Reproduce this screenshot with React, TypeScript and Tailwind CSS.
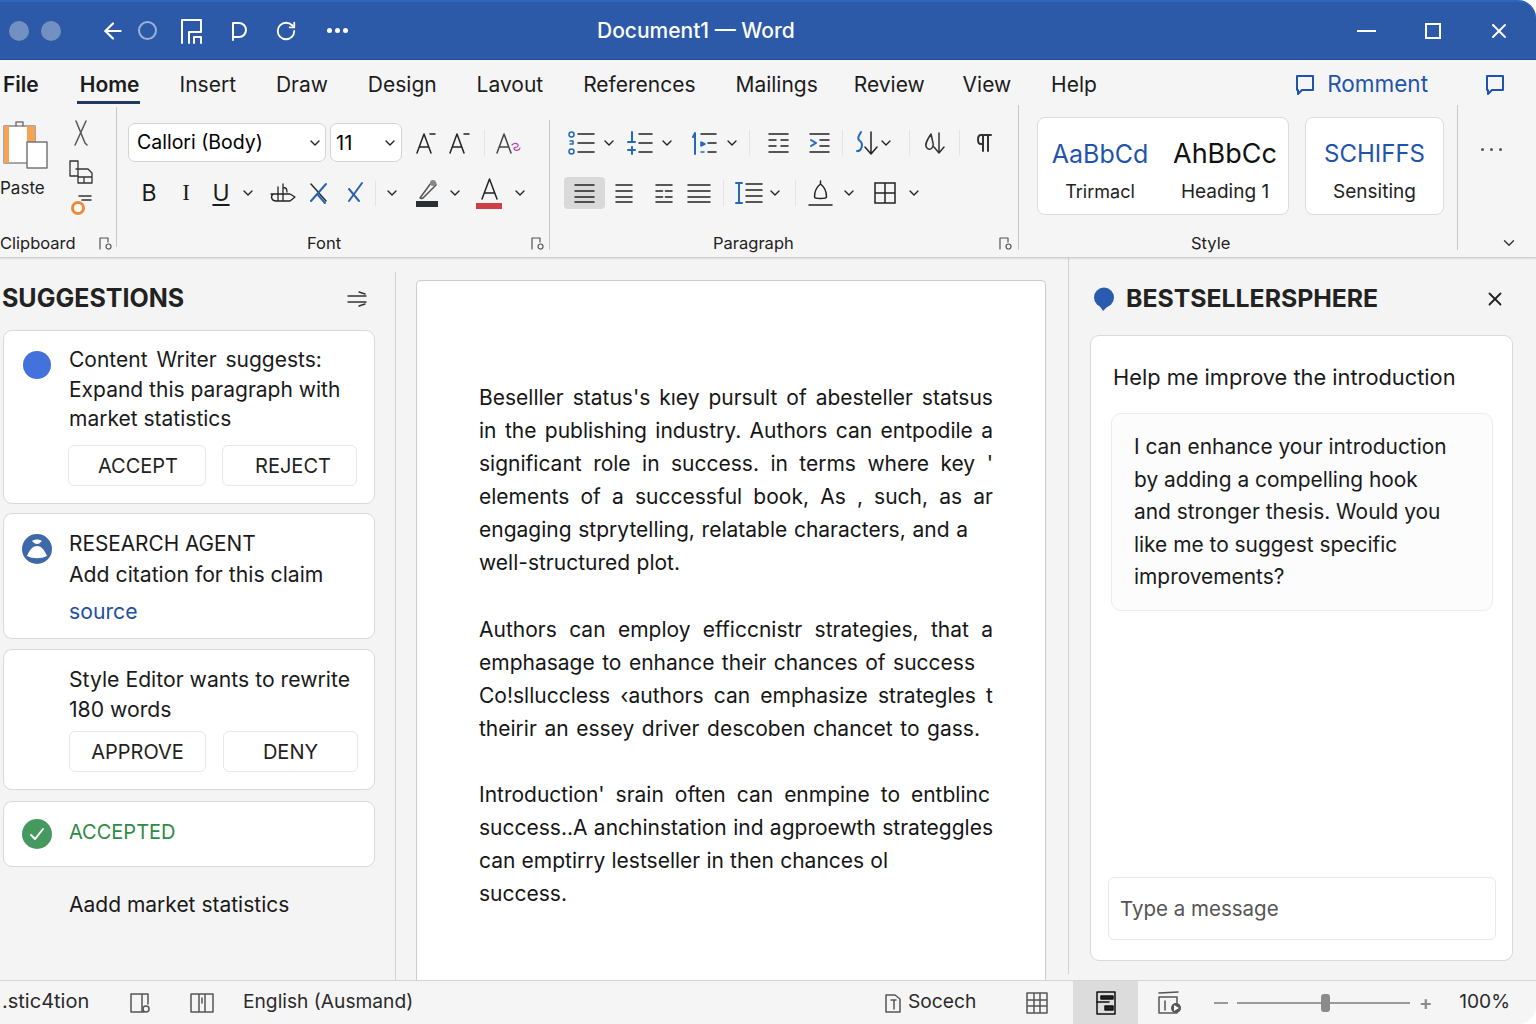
import type { ReactNode } from "react";
import { ArrowLeft, ChevronDown, RotateCw, X } from "lucide-react";

// stroke icon wrapper, the viewBox is always the pixel size of the icon
const Ico = ({ w, h, className = "", children }: { w: number; h: number; className?: string; children: ReactNode }) => (
  <svg
    width={w}
    height={h}
    viewBox={`0 0 ${w} ${h}`}
    fill="none"
    stroke="currentColor"
    strokeWidth="1.5"
    strokeLinecap="round"
    strokeLinejoin="round"
    className={`shrink-0 ${className}`}
  >
    {children}
  </svg>
);

const Chev = ({ className = "" }: { className?: string }) => (
  <ChevronDown size={16} strokeWidth={2} className={`shrink-0 text-[#222] ${className}`} />
);

const Sep = ({ className = "" }: { className?: string }) => (
  <div className={`w-px h-[26px] shrink-0 bg-[#e4e4e4] ${className}`} />
);

const GroupLine = ({ className = "" }: { className?: string }) => (
  <div className={`w-px shrink-0 bg-[#c8c8c8] ${className}`} />
);

const Launcher = ({ className = "" }: { className?: string }) => (
  <Ico w={13} h={13} className={`text-[#555] ${className}`}>
    <path d="M1 12V1h8v4M1 1" strokeWidth="1.2" />
    <circle cx="9.5" cy="9.5" r="2.5" strokeWidth="1.2" />
  </Ico>
);

// horizontal text lines, used for the paragraph buttons
const Lines = ({ w, ys, short = [], className = "" }: { w: number; ys: number[]; short?: number[]; className?: string }) => (
  <Ico w={w} h={22} className={`text-[#222] ${className}`}>
    {ys.map((y, i) =>
      short.includes(i) ? (
        <path key={y} d={`M1 ${y}H${w * 0.42}M${w * 0.58} ${y}H${w - 1}`} />
      ) : (
        <path key={y} d={`M1 ${y}H${w - 1}`} />
      )
    )}
  </Ico>
);

const Bubble = ({ className = "" }: { className?: string }) => (
  <Ico w={20} h={22} className={className}>
    <path d="M2 2h16v14H7l-4 4v-4H2z" strokeWidth="2" />
  </Ico>
);

const TitleBar = () => (
  <div className="h-[60px] shrink-0 flex items-center bg-[#2c5aa8] border-t-2 border-t-[#2f65c0] border-b border-b-[#234d96] rounded-tr-[18px] text-white">
    <div className="w-[20px] h-[20px] rounded-full bg-[#7390c2] ml-[9px]" />
    <div className="w-[20px] h-[20px] rounded-full bg-[#7390c2] ml-[12px]" />
    <ArrowLeft size={26} strokeWidth={2} className="ml-[39px]" />
    <div className="w-[19px] h-[19px] rounded-full border-2 border-[#9db2d6] ml-[12px]" />
    <Ico w={24} h={26} className="ml-[23px]">
      <path d="M2 25V2h19v12H9v11M14 25v-6h7v6" strokeWidth="2" />
    </Ico>
    <Ico w={18} h={20} className="ml-[27px]">
      <path d="M2 19V2h6a7 7 0 0 1 0 14H3" strokeWidth="2" />
    </Ico>
    <RotateCw size={22} strokeWidth={2} className="ml-[26px]" />
    <div className="flex gap-[3px] ml-[30px]">
      <div className="w-[5px] h-[5px] rounded-full bg-white" />
      <div className="w-[5px] h-[5px] rounded-full bg-white" />
      <div className="w-[5px] h-[5px] rounded-full bg-white" />
    </div>
    <div className="ml-[249px] text-[21px] font-medium">Document1 — Word</div>
    <div className="w-[19px] h-[2px] bg-white ml-[562px]" />
    <div className="w-[16px] h-[16px] border-2 border-white ml-[49px]" />
    <X size={24} strokeWidth={2} className="ml-[46px]" />
  </div>
);

const TabRow = () => (
  <div className="h-[45px] shrink-0 flex items-start pt-[11px] pl-[3px] pr-[31px] bg-[#f5f5f5] text-[21px] leading-[28px] text-[#1c1c1c]">
    <div className="font-semibold mr-[41px]">File</div>
    <div className="font-semibold -ml-[3px] pl-[3px] pb-[2px] border-b-[3px] border-[#1e3a5f] mr-[40px]">Home</div>
    <div className="flex gap-[39.9px]">
      <div>Insert</div>
      <div>Draw</div>
      <div>Design</div>
      <div>Lavout</div>
      <div>References</div>
      <div>Mailings</div>
      <div className="-ml-[4px]">Review</div>
      <div className="-ml-[2px]">View</div>
      <div>Help</div>
    </div>
    <div className="ml-auto flex items-start text-[22.5px] text-[#1f54ad]">
      <Bubble className="mt-[3px] -ml-[2px]" />
      <div className="ml-[12px] -mt-[1px]">Romment</div>
      <Bubble className="mt-[3px] ml-[57px]" />
    </div>
  </div>
);

const FontGroup = () => (
  <div className="w-[432px] shrink-0 flex flex-col">
    <div className="flex items-center h-[39px] mt-[18px] ml-[11px]">
      <div className="w-[198px] h-[39px] flex items-center justify-between pl-[8px] pr-[2px] pt-[1px] bg-white border border-[#d4d4d4] rounded-[7px] text-[19.5px]">
        Callori (Body)
        <Chev />
      </div>
      <div className="w-[72px] h-[39px] ml-[4px] flex items-center justify-between pl-[5px] pr-[3px] pt-[1px] bg-white border border-[#d4d4d4] rounded-[7px] text-[20px]">
        11
        <Chev />
      </div>
      <Ico w={20} h={24} className="ml-[14px] text-[#222]">
        <path d="M1 22L8 3l7 19M4 16h8M14 3h5" />
      </Ico>
      <Ico w={22} h={24} className="ml-[13px] text-[#222]">
        <path d="M1 22L8 3l7 19M4 16h8M15 3h5" />
      </Ico>
      <Sep className="ml-[13px]" />
      <Ico w={26} h={24} className="ml-[11px]">
        <path d="M1 22L8 3l7 19M4 16h8" className="text-[#444]" />
        <path d="M16 14c3-3 7-1 6 1s-5 1-4 3 5 2 6-1" stroke="#b53fb5" strokeWidth="1.2" />
      </Ico>
    </div>
    <div className="flex items-center h-[40px] mt-[11px] ml-[22px] text-[23px] text-[#1c1c1c]">
      <div className="w-[20px] text-center">B</div>
      <div className="w-[20px] ml-[17px] text-center [font-family:'Liberation_Serif',serif]">I</div>
      <div className="w-[20px] ml-[15px] text-center underline underline-offset-[3px]">U</div>
      <Chev className="ml-[9px]" />
      <Ico w={26} h={22} className="ml-[14px] text-[#222]">
        <path d="M1 12h19l5 3-5 4M3 12c-3 3-1 7 3 7h14M8 5v14M13 2v17M13 6c3-1 4 1 4 4" strokeWidth="1.3" />
      </Ico>
      <Ico w={19} h={24} className="ml-[13px]">
        <path d="M2 3l15 17" stroke="#2b2b2b" />
        <path d="M17 3L2 20M9 14l7 8" stroke="#2b62ad" strokeWidth="2" />
      </Ico>
      <Ico w={17} h={24} className="ml-[18px]">
        <path d="M16 2L3 20" stroke="#2b62ad" strokeWidth="2" />
        <path d="M3 8l10 12" stroke="#2b62ad" strokeWidth="2" />
      </Ico>
      <Sep className="ml-[12px]" />
      <Chev className="ml-[8px]" />
      <Ico w={24} h={30} className="ml-[15px]">
        <path d="M5 20L16 5c2-2 5-1 5 2L8 20c-2 1-3 0-3 0z" stroke="#555" />
        <circle cx="18" cy="5" r="3" fill="#888" stroke="none" />
        <rect x="1" y="23" width="22" height="6" fill="#2b2f33" stroke="none" />
      </Ico>
      <Chev className="ml-[8px]" />
      <Ico w={27} h={32} className="ml-[13px]">
        <path d="M6 22L13.5 2 21 22M8.5 16h10" stroke="#222" />
        <rect x="0" y="26" width="26" height="6" fill="#cf3f48" stroke="none" />
      </Ico>
      <Chev className="ml-[9px]" />
    </div>
    <div className="mt-auto h-[26px] flex items-center pb-[2px] pl-[190px] text-[16.5px] text-[#222]">
      Font
      <Launcher className="ml-auto mr-[5px]" />
    </div>
  </div>
);

const ParagraphGroup = () => (
  <div className="w-[468px] shrink-0 flex flex-col">
    <div className="flex items-center h-[39px] mt-[18px]">
      <Ico w={27} h={24} className="ml-[18px] text-[#222]">
        <circle cx="3.5" cy="3.5" r="2.5" stroke="#2468b8" />
        <circle cx="3.5" cy="20.5" r="2.5" stroke="#2468b8" />
        <path d="M2 10h3v3H2" stroke="#2468b8" />
        <path d="M10 3h16M10 12h16M10 21h16" />
      </Ico>
      <Chev className="ml-[6px]" />
      <Ico w={26} h={24} className="ml-[10px] text-[#222]">
        <path d="M5 1v9M1 11h7M5 16v7M1 19h7" stroke="#2468b8" strokeWidth="2" />
        <path d="M12 3h13M12 12h13M12 21h13" />
      </Ico>
      <Chev className="ml-[6px]" />
      <Ico w={25} h={24} className="ml-[17px] text-[#222]">
        <path d="M3 23V2L1 6" stroke="#2468b8" strokeWidth="2" />
        <path d="M9 11l4 2-4 2zM9 21h3" stroke="#2468b8" fill="#2468b8" />
        <path d="M9 3h15M16 12h8M16 21h8" />
      </Ico>
      <Chev className="ml-[7px]" />
      <Sep className="ml-[9px]" />
      <Ico w={21} h={24} className="ml-[18px] text-[#222]">
        <path d="M1 3h19M1 9h7M13 9h7M1 15h7M13 15h7M1 21h19" />
      </Ico>
      <Ico w={21} h={24} className="ml-[20px] text-[#222]">
        <path d="M1 3h19M11 9h9M11 15h9M1 21h19" />
        <path d="M2 9l5 3-5 3" stroke="#2468b8" strokeWidth="2" />
      </Ico>
      <Sep className="ml-[12px]" />
      <Ico w={23} h={26} className="ml-[12px]">
        <path d="M6 2c-3 5-4 7-1 9 4 3 1 11-3 10" stroke="#2468b8" strokeWidth="2" />
        <path d="M16 2v22M10 17l6 7 6-7" stroke="#222" />
      </Ico>
      <Chev />
      <Sep className="ml-[15px]" />
      <Ico w={21} h={24} className="ml-[14px] text-[#333]">
        <path d="M7 3C3 9 0 14 3 17c3 3 7 0 6-5zM15 2v20M10 16l5 6 5-6" />
      </Ico>
      <Sep className="ml-[14px]" />
      <Ico w={16} h={20} className="ml-[16px] text-[#333]">
        <path d="M7 2H5C1 2 1 11 5 11h2zM7 2h8M7 2v16M12 2v16" strokeWidth="2" />
      </Ico>
    </div>
    <div className="flex items-center h-[40px] mt-[11px]">
      <div className="w-[41px] h-[32px] ml-[14px] flex items-center justify-center rounded-[4px] bg-[#d9d9d9]">
        <Lines w={21} ys={[3, 9, 15, 20]} />
      </div>
      <Lines w={18} ys={[3, 9, 15, 20]} className="ml-[10px]" />
      <Lines w={18} ys={[3, 9, 15, 20]} short={[1, 2]} className="ml-[22px]" />
      <Lines w={24} ys={[3, 9, 15, 20]} className="ml-[14px]" />
      <Sep className="ml-[12px]" />
      <Ico w={28} h={24} className="ml-[11px] text-[#222]">
        <path d="M4 2v20M1 2h6M1 22h6" stroke="#2468b8" strokeWidth="2" />
        <path d="M11 3h16M11 9h16M11 15h16M11 21h16" />
      </Ico>
      <Chev className="ml-[4px]" />
      <Sep className="ml-[12px]" />
      <Ico w={25} h={28} className="ml-[12px] text-[#222]">
        <path d="M12.5 2v3M12.5 5c4 3 6 8 6 13 0 2-12 2-12 0 0-5 2-10 6-13zM1 26h23" />
      </Ico>
      <Chev className="ml-[8px]" />
      <Ico w={22} h={22} className="ml-[17px] text-[#222]">
        <path d="M1 1h20v20H1zM11 1v20M1 11h20" strokeLinecap="butt" strokeLinejoin="miter" />
      </Ico>
      <Chev className="ml-[10px]" />
    </div>
    <div className="mt-auto h-[26px] flex items-center pb-[2px] pl-[163px] text-[16.5px] text-[#222]">
      Paragraph
      <Launcher className="ml-auto mr-[6px]" />
    </div>
  </div>
);

const StyleGroup = () => (
  <div className="flex-1 flex">
    <div className="w-[438px] shrink-0 flex flex-col">
      <div className="flex mt-[12px] ml-[18px]">
        <div className="w-[252px] h-[98px] flex bg-white border border-[#dcdcdc] rounded-[8px]">
          <div className="w-[124px] flex flex-col items-center pt-[19px]">
            <div className="text-[25px] leading-[34px] text-[#1f54ad]">AaBbCd</div>
            <div className="mt-[9px] text-[18px] leading-[24px] text-[#222]">Trirmacl</div>
          </div>
          <div className="w-[126px] flex flex-col items-center pt-[19px]">
            <div className="text-[27px] leading-[34px] text-[#111]">AhBbCc</div>
            <div className="mt-[9px] text-[19px] leading-[24px] text-[#222]">Heading 1</div>
          </div>
        </div>
        <div className="w-[139px] h-[98px] ml-[16px] flex flex-col items-center pt-[19px] bg-white border border-[#dcdcdc] rounded-[8px]">
          <div className="text-[24px] leading-[34px] text-[#1f54ad]">SCHIFFS</div>
          <div className="mt-[9px] text-[19px] leading-[24px] text-[#222]">Sensiting</div>
        </div>
      </div>
      <div className="mt-auto h-[26px] flex items-center pb-[2px] pl-[172px] text-[16.5px] text-[#222]">Style</div>
    </div>
    <GroupLine className="h-[145px]" />
    <div className="flex-1 flex flex-col items-center">
      <div className="flex gap-[6px] mt-[43px] -ml-[12px]">
        <div className="w-[3px] h-[3px] rounded-full bg-[#555]" />
        <div className="w-[3px] h-[3px] rounded-full bg-[#555]" />
        <div className="w-[3px] h-[3px] rounded-full bg-[#555]" />
      </div>
      <ChevronDown size={18} strokeWidth={1.8} className="mt-auto mb-[5px] ml-[24px] text-[#333]" />
    </div>
  </div>
);

const Ribbon = () => (
  <div className="h-[153px] shrink-0 flex bg-[#f5f5f5] border-b border-[#cfcfcf] shadow-[0_1px_2px_rgba(0,0,0,0.1)] z-10">
    <div className="w-[116px] shrink-0 flex flex-col">
      <div className="flex mt-[15px]">
        <div className="w-[65px] flex flex-col items-start">
          <Ico w={46} h={50} className="ml-[3px]">
            <rect x="1" y="6" width="31" height="37" fill="#fff" stroke="#8a8a8a" />
            <path d="M1 6h5v37H1zM24 6h8v17h-8z" fill="#f5a354" stroke="none" />
            <path d="M13 6V2h7v4" stroke="#777" />
            <rect x="24" y="22" width="20" height="26" fill="#fff" stroke="#777" />
          </Ico>
          <div className="mt-[7px] text-[17px] leading-[22px] text-[#222]">Paste</div>
        </div>
        <div className="flex flex-col ml-[3px]">
          <Ico w={16} h={26} className="ml-[5px] text-[#555]">
            <path d="M3 1l9 22M13 1L3 23M3 23l-1 2M12 23l2 2" />
          </Ico>
          <Ico w={26} h={26} className="mt-[13px] text-[#333]">
            <path d="M2 2h8v15H2zM8 10h12l4 4v10H10V17M10 18h14M16 18v6" strokeWidth="1.3" />
          </Ico>
          <Ico w={24} h={24} className="mt-[8px]">
            <circle cx="10" cy="15" r="5.5" fill="#fff" stroke="#ea8a3a" strokeWidth="3" />
            <path d="M11 3h12M14 7h9" stroke="#333" />
          </Ico>
        </div>
      </div>
      <div className="mt-auto h-[26px] flex items-center pb-[2px] text-[16.5px] text-[#222]">
        Clipboard
        <Launcher className="ml-auto mr-[4px]" />
      </div>
    </div>
    <GroupLine className="h-[140px] mt-[2px]" />
    <FontGroup />
    <GroupLine className="h-[130px] mt-[15px]" />
    <ParagraphGroup />
    <GroupLine className="h-[145px]" />
    <StyleGroup />
  </div>
);

const cardCls = "w-[372px] ml-[3px] bg-white border border-[#d9d9d9] rounded-[9px]";
const btnCls = "h-[41px] flex items-center justify-center border border-[#e8e8e8] rounded-[6px] text-[20px] text-[#222]";

const Suggestions = () => (
  <div className="w-[395px] shrink-0 flex flex-col text-[#1a1a1a]">
    <div className="h-[72px] shrink-0 flex items-center justify-between pt-[10px] pl-[2px] pr-[28px]">
      <div className="text-[25px] font-bold text-[#222]">SUGGESTIONS</div>
      <Ico w={20} h={18} className="text-[#333]">
        <path d="M1 6h18M1 12h18M12 2l6 2M12 16l6-2" strokeWidth="1.4" />
      </Ico>
    </div>
    <div className={`${cardCls} h-[174px] flex`}>
      <div className="w-[28px] h-[28px] rounded-full bg-[#4472dc] ml-[19px] mt-[20px] shrink-0" />
      <div className="ml-[18px] pt-[14px] flex-1">
        <div className="text-[21px] leading-[29.5px]">
          <span className="[word-spacing:3px]">Content Writer suggests:</span>
          <br />
          Expand this paragraph with
          <br />
          market statistics
        </div>
        <div className="flex mt-[11px]">
          <div className={`${btnCls} w-[138px] -ml-[1px] pt-[2px] pl-[2px]`}>ACCEPT</div>
          <div className={`${btnCls} w-[135px] ml-[16px] pt-[2px] pl-[7px]`}>REJECT</div>
        </div>
      </div>
    </div>
    <div className={`${cardCls} h-[126px] mt-[9px] flex`}>
      <div className="w-[30px] h-[30px] ml-[18px] mt-[20px] shrink-0">
        <svg width="30" height="30" viewBox="0 0 30 30">
          <circle cx="15" cy="15" r="15" fill="#3e69a8" />
          <path d="M10 7c3-2 7-2 10 0-2 2-3 3-5 3s-3-1-5-3zM5 22c3-7 6-10 10-10s7 3 10 10c-6 3-14 3-20 0z" fill="#fff" />
        </svg>
      </div>
      <div className="ml-[17px] pt-[15px] text-[21.2px] leading-[30px]">
        <div className="text-[20.8px]">RESEARCH AGENT</div>
        <div>Add citation for this claim</div>
        <div className="mt-[7px] text-[#1f4fa3]">source</div>
      </div>
    </div>
    <div className={`${cardCls} h-[141px] mt-[10px] pl-[65px] pt-[15px]`}>
      <div className="text-[21.2px] leading-[29.5px]">
        Style Editor wants to rewrite
        <br />
        180 words
      </div>
      <div className="flex mt-[7px]">
        <div className={`${btnCls} w-[137px]`}>APPROVE</div>
        <div className={`${btnCls} w-[135px] ml-[17px]`}>DENY</div>
      </div>
    </div>
    <div className={`${cardCls} h-[66px] mt-[11px] flex items-center`}>
      <div className="w-[30px] h-[30px] ml-[18px] shrink-0 flex items-center justify-center rounded-full bg-[#45995f]">
        <Ico w={16} h={14} className="text-white">
          <path d="M2 8l4 4 8-10" strokeWidth="2" />
        </Ico>
      </div>
      <div className="ml-[17px] -mt-[4px] text-[20px] text-[#2f8a47]">ACCEPTED</div>
    </div>
    <div className="ml-[69px] mt-[24px] text-[21px] leading-[28px]">Aadd market statistics</div>
  </div>
);

type DocLine = { t: string; w: string };

const paragraphs: DocLine[][] = [
  [
    { t: "Beselller status's kıey pursult of abesteller statsus", w: "w-[514px]" },
    { t: "in the publishing industry. Authors can entpodile a", w: "w-[514px]" },
    { t: "significant role in success. in terms where key '", w: "w-[514px]" },
    { t: "elements of a successful book, As , such, as ar", w: "w-[514px]" },
    { t: "engaging stprytelling, relatable characters, and a", w: "w-[489px]" },
    { t: "well-structured plot.", w: "w-[201px]" },
  ],
  [
    { t: "Authors can employ efficcnistr strategies, that a", w: "w-[514px]" },
    { t: "emphasage to enhance their chances of success", w: "w-[496px]" },
    { t: "Co!slluccless ‹authors can emphasize strategles t", w: "w-[514px]" },
    { t: "theirir an essey driver descoben chancet to gass.", w: "w-[501px]" },
  ],
  [
    { t: "Introduction' srain often can enmpine to entblinc", w: "w-[511px]" },
    { t: "success..A anchinstation ind agproewth strateggles", w: "w-[514px]" },
    { t: "can emptirry lestseller in then chances ol", w: "w-[409px]" },
    { t: "success.", w: "w-[88px]" },
  ],
];

const Page = () => (
  <div className="w-[630px] h-[700px] shrink-0 mt-[22px] ml-[20px] pl-[62px] pt-[100px] bg-white border border-b-0 border-[#cdcdcd] rounded-t-[5px] text-[21px] leading-[33.1px] text-[#161616]">
    {paragraphs.map((p, i) => (
      <div key={i} className="mb-[33px]">
        {p.map((l) => (
          <div key={l.t} className={`${l.w} flex justify-between whitespace-nowrap`}>
            {l.t.split(" ").map((word, j) => (
              <span key={j}>{word}</span>
            ))}
          </div>
        ))}
      </div>
    ))}
  </div>
);

const Assistant = () => (
  <div className="flex-1 flex flex-col text-[#1a1a1a]">
    <div className="h-[77px] shrink-0 flex items-center pt-[4px] pl-[24px] pr-[30px]">
      <Ico w={22} h={24} className="text-[#2a5bb0]">
        <circle cx="11" cy="10.5" r="10" fill="currentColor" stroke="none" />
        <path d="M6 18l4 6 5-5z" fill="currentColor" stroke="none" />
      </Ico>
      <div className="ml-[11px] text-[24.8px] font-bold text-[#222]">BESTSELLERSPHERE</div>
      <X size={22} strokeWidth={2} className="ml-auto text-[#222]" />
    </div>
    <div className="w-[423px] h-[626px] ml-[21px] flex flex-col bg-white border border-[#d9d9d9] rounded-[9px]">
      <div className="ml-[22px] mt-[25px] text-[21.8px] leading-[32px]">Help me improve the introduction</div>
      <div className="w-[382px] h-[198px] ml-[20px] mt-[20px] pl-[22px] pt-[17px] bg-[#fcfcfc] border border-[#ececec] rounded-[10px] text-[20.9px] leading-[32.6px]">
        I can enhance your introduction
        <br />
        by adding a compelling hook
        <br />
        and stronger thesis. Would you
        <br />
        like me to suggest specific
        <br />
        improvements?
      </div>
      <div className="w-[388px] h-[63px] ml-[17px] mt-auto mb-[20px] flex items-center pl-[11px] pt-[2px] border border-[#e8e8e8] rounded-[6px] text-[20.5px] text-[#555]">
        Type a message
      </div>
    </div>
  </div>
);

const StatusBar = () => (
  <div className="h-[44px] shrink-0 flex items-center bg-[#f5f5f5] border-t border-[#d4d4d4] rounded-br-[18px] text-[19.2px] text-[#2b2b2b]">
    <div className="w-[87px] ml-[2px] pb-[3px] text-[20px] whitespace-nowrap">.stic4tion</div>
    <Ico w={22} h={22} className="ml-[41px] text-[#555]">
      <path d="M1 2h11v18H1zM12 2h6v10M12 20h2" />
      <circle cx="16" cy="17" r="3" />
    </Ico>
    <Ico w={24} h={22} className="ml-[38px] text-[#555]">
      <path d="M1 2h22v18H1zM9 2v18M15 2v18M12 6v5" />
    </Ico>
    <div className="w-[168px] ml-[29px] pb-[3px] whitespace-nowrap">English (Ausmand)</div>
    <Ico w={16} h={20} className="ml-[474px] text-[#555]">
      <path d="M1 2h9l5 4v13H1zM6 7h5M9 7v9" />
    </Ico>
    <div className="w-[67px] ml-[7px] pb-[3px]">Socech</div>
    <Ico w={22} h={22} className="ml-[51px] text-[#555]">
      <path d="M1 1h20v20H1zM8 1v20M14 1v20M1 8h20M1 14h20" strokeLinecap="butt" />
    </Ico>
    <div className="w-[65px] h-[43px] ml-[25px] flex items-center justify-center bg-[#dcdcdc]">
      <Ico w={20} h={24} className="text-[#111]">
        <path d="M1 1h18v22H1z" />
        <path d="M5 5h12v3H5zM1 11h12M9 15h8v4H9z" fill="#222" />
      </Ico>
    </div>
    <Ico w={25} h={24} className="ml-[20px] text-[#555]">
      <path d="M1 6h18v16H1zM1 2l19-1M7 10v9" />
      <circle cx="18" cy="17" r="5" fill="#555" stroke="none" />
      <path d="M16 14l5 3-5 3z" fill="#fff" stroke="none" />
    </Ico>
    <div className="w-[14px] h-[2px] ml-[31px] bg-[#999]" />
    <div className="w-[173px] h-[10px] ml-[9px] flex items-center">
      <div className="flex-1 h-[2px] bg-[#999]" />
      <div className="w-[9px] h-[18px] rounded-[3px] bg-[#8b8b8b] shrink-0" />
      <div className="w-[80px] h-[2px] bg-[#999]" />
    </div>
    <div className="ml-[9px] text-[20px] leading-none font-semibold text-[#8b8b8b]">+</div>
    <div className="ml-auto mr-[26px] pb-[3px]">100%</div>
  </div>
);

export default function App() {
  return (
    <div className="w-[1536px] h-[1024px] overflow-hidden flex flex-col bg-white [font-family:Inter,sans-serif]">
      <TitleBar />
      <TabRow />
      <Ribbon />
      <div className="flex-1 min-h-0 flex bg-[#f4f4f4]">
        <Suggestions />
        <GroupLine className="mt-[14px] bg-[#d2d2d2]" />
        <Page />
        <GroupLine className="ml-[22px] mb-[6px] bg-[#d2d2d2]" />
        <Assistant />
      </div>
      <StatusBar />
    </div>
  );
}
